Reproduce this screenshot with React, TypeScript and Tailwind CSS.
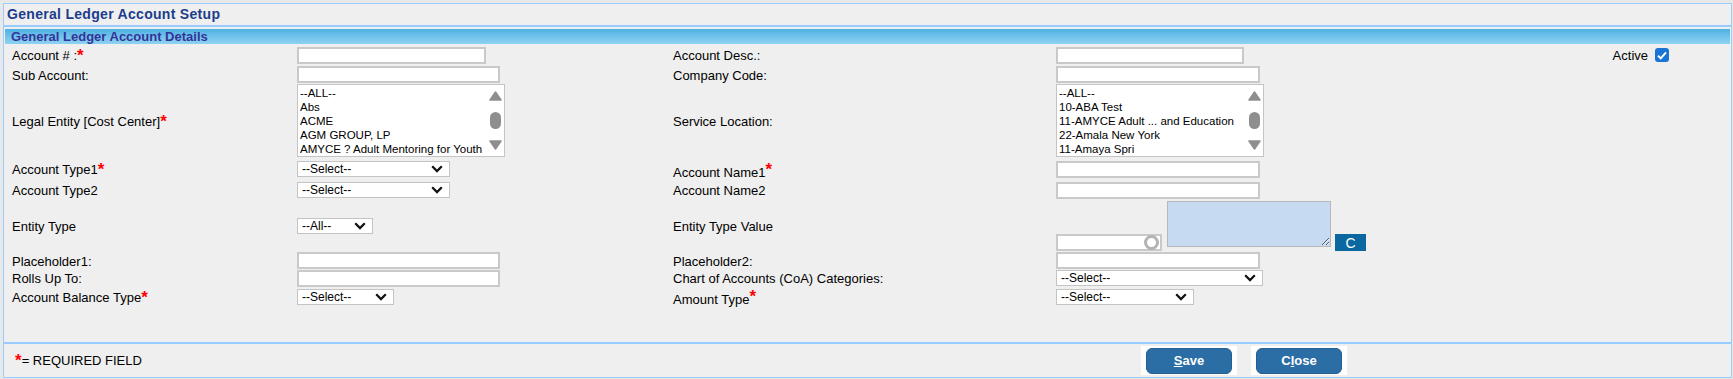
import React from "react";

const Req = () => (
  <span className="text-[#ff0000] text-[17px] font-bold leading-none align-[2px]">*</span>
);

function Label({ children }: { children: React.ReactNode }) {
  return <div className="flex items-center pl-[8px] pt-[1px] text-[13px] text-black leading-none">{children}</div>;
}

function TextBox({ w }: { w: string }) {
  return <input type="text" className={`${w} h-[17px] bg-white border-2 border-[#c9c9c9] outline-none`} />;
}

function Chevron() {
  return (
    <svg width="12" height="8" viewBox="0 0 12 8" className="shrink-0">
      <path d="M1.2 1.3 L6 6.1 L10.8 1.3" fill="none" stroke="#111" strokeWidth="2.2" />
    </svg>
  );
}

function Select({ w, text = "--Select--" }: { w: string; text?: string }) {
  return (
    <div className={`${w} h-[16px] bg-white border border-[#c4c4c4] flex items-center justify-between pl-[4px] pr-[6px] text-[12px] text-black`}>
      <span>{text}</span>
      <Chevron />
    </div>
  );
}

function ListBox({ items }: { items: string[] }) {
  return (
    <div className="w-[208px] h-[73px] bg-white border border-[#c4c4c4] flex">
      <ul className="flex-1 pt-[1px] pl-[2px] text-[11.5px] text-black leading-[14px] whitespace-nowrap overflow-hidden">
        {items.map((it) => (
          <li key={it}>{it}</li>
        ))}
      </ul>
      <div className="w-[17px] flex flex-col items-center justify-between py-[6px]">
        <svg width="13" height="10" viewBox="0 0 13 10">
          <path d="M6.5 1 L12 9 L1 9 Z" fill="#8e8e8e" stroke="#8e8e8e" strokeWidth="1.5" strokeLinejoin="round" />
        </svg>
        <span className="w-[11px] h-[17px] rounded-full bg-[#8e8e8e]" />
        <svg width="13" height="10" viewBox="0 0 13 10">
          <path d="M1 1 L12 1 L6.5 9 Z" fill="#8e8e8e" stroke="#8e8e8e" strokeWidth="1.5" strokeLinejoin="round" />
        </svg>
      </div>
    </div>
  );
}

function Cell({ children, className = "" }: { children?: React.ReactNode; className?: string }) {
  return <div className={`flex items-center ${className}`}>{children}</div>;
}

function FooterButton({ label, u, rest, pre = "" }: { label: string; u: string; rest: string; pre?: string }) {
  return (
    <div className="bg-white px-[5px] pt-[2px] pb-[1px]">
      <button
        aria-label={label}
        className="w-[86px] h-[26px] rounded-[6px] bg-[#2b6ea6] border border-[#245f91] text-white text-[13px] font-bold"
      >
        {pre}
        <span className="underline">{u}</span>
        {rest}
      </button>
    </div>
  );
}

export default function App() {
  return (
    <div className="min-h-[379px] bg-[#e8e8e8] pt-[3px] font-['Liberation_Sans',Arial,sans-serif]">
      <div className="ml-[3px] w-[1729px] h-[375px] border border-[#99ccff] bg-[#efefef] flex flex-col">
        <div className="h-[21px] flex items-center pl-[3px] text-[14px] font-bold text-[#1b3d8d] tracking-[0.3px]">
          General Ledger Account Setup
        </div>
        <div className="border-b-2 border-[#99ccff]" />
        <div className="pt-[2px] px-[1px]">
          <div className="h-[15px] flex items-center pl-[6px] bg-gradient-to-b from-[#4db2e4] to-[#8fd2f0] text-[13px] font-bold text-[#333399]">
            General Ledger Account Details
          </div>
        </div>

        <div className="flex-1 pt-[1px]">
          <div className="grid grid-cols-[293px_376px_383px_1fr] grid-rows-[20px_19px_74px_22px_20px_52px_17px_18px_19px]">
            {/* row 1 */}
            <Label>
              Account # :<Req />
            </Label>
            <Cell>
              <TextBox w="w-[189px]" />
            </Cell>
            <Label>
              <span className="-ml-[8px]">Account Desc.:</span>
            </Label>
            <Cell>
              <TextBox w="w-[188px]" />
              <div className="ml-auto mr-[62px] flex items-center gap-[7px]">
                <span className="text-[13px] text-black pt-[2px]">Active</span>
                <span className="w-[14px] h-[14px] rounded-[3px] bg-[#1a74d6] flex items-center justify-center">
                  <svg width="10" height="9" viewBox="0 0 10 9">
                    <path d="M1 4.8 L3.8 7.4 L9 1.4" fill="none" stroke="white" strokeWidth="2" />
                  </svg>
                </span>
              </div>
            </Cell>

            {/* row 2 */}
            <Label>Sub Account:</Label>
            <Cell>
              <TextBox w="w-[203px]" />
            </Cell>
            <Label>
              <span className="-ml-[8px]">Company Code:</span>
            </Label>
            <Cell>
              <TextBox w="w-[204px]" />
            </Cell>

            {/* row 3 */}
            <Label>
              Legal Entity [Cost Center]<Req />
            </Label>
            <Cell className="items-start">
              <ListBox items={["--ALL--", "Abs", "ACME", "AGM GROUP, LP", "AMYCE ? Adult Mentoring for Youth"]} />
            </Cell>
            <Label>
              <span className="-ml-[8px]">Service Location:</span>
            </Label>
            <Cell className="items-start">
              <ListBox
                items={["--ALL--", "10-ABA Test", "11-AMYCE Adult ... and Education", "22-Amala New York", "11-Amaya Spri"]}
              />
            </Cell>

            {/* row 4 */}
            <Label>
              Account Type1<Req />
            </Label>
            <Cell>
              <Select w="w-[153px]" />
            </Cell>
            <Label>
              <span className="-ml-[8px]">
                Account Name1<Req />
              </span>
            </Label>
            <Cell>
              <TextBox w="w-[204px]" />
            </Cell>

            {/* row 5 */}
            <Label>Account Type2</Label>
            <Cell>
              <Select w="w-[153px]" />
            </Cell>
            <Label>
              <span className="-ml-[8px]">Account Name2</span>
            </Label>
            <Cell>
              <TextBox w="w-[204px]" />
            </Cell>

            {/* row 6 */}
            <Label>Entity Type</Label>
            <Cell>
              <Select w="w-[76px]" text="--All--" />
            </Cell>
            <Label>
              <span className="-ml-[8px]">Entity Type Value</span>
            </Label>
            <Cell className="items-end pb-[1px]">
              <div className="w-[106px] h-[17px] bg-white border-2 border-[#c9c9c9] flex items-center justify-end pr-[1px]">
                <span className="w-[15px] h-[15px] rounded-full border-[3px] border-[#b4b4b4]" />
              </div>
              <textarea className="ml-[5px] mb-[4px] w-[164px] h-[46px] bg-[#c6daf2] border border-[#b8b8b8] resize outline-none" />
              <button className="ml-[4px] w-[31px] h-[17px] bg-[#0b67a0] text-white text-[14px] leading-none">C</button>
            </Cell>

            {/* row 7 */}
            <Label>Placeholder1:</Label>
            <Cell>
              <TextBox w="w-[203px]" />
            </Cell>
            <Label>
              <span className="-ml-[8px]">Placeholder2:</span>
            </Label>
            <Cell>
              <TextBox w="w-[204px]" />
            </Cell>

            {/* row 8 */}
            <Label>Rolls Up To:</Label>
            <Cell>
              <TextBox w="w-[203px]" />
            </Cell>
            <Label>
              <span className="-ml-[8px]">Chart of Accounts (CoA) Categories:</span>
            </Label>
            <Cell>
              <Select w="w-[207px]" />
            </Cell>

            {/* row 9 */}
            <Label>
              Account Balance Type<Req />
            </Label>
            <Cell>
              <Select w="w-[97px]" />
            </Cell>
            <Label>
              <span className="-ml-[8px]">
                Amount Type<Req />
              </span>
            </Label>
            <Cell>
              <Select w="w-[138px]" />
            </Cell>
          </div>
        </div>

        <div className="border-t-2 border-[#99ccff] h-[35px] grid grid-cols-[293px_376px_383px_1fr]">
          <div className="flex items-center pl-[11px] text-[13px] text-black">
            <span className="text-[#ff0000] text-[17px] font-bold leading-none align-[2px]">*</span>
            <span>= REQUIRED FIELD</span>
          </div>
          <div />
          <div />
          <div className="flex items-center pl-[85px] gap-[14px]">
            <FooterButton label="Save" u="S" rest="ave" />
            <FooterButton label="Close" pre="C" u="l" rest="ose" />
          </div>
        </div>
      </div>
    </div>
  );
}
